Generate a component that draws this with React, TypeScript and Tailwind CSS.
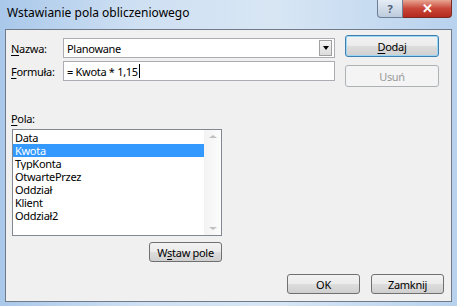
const font = { fontFamily: '"Noto Sans", "Open Sans", sans-serif' };

function Btn({ children, className = "", disabled = false, primary = false }: { children: React.ReactNode; className?: string; disabled?: boolean; primary?: boolean }) {
  if (disabled) {
    return (
      <div className={`flex items-center justify-center rounded-[3px] border border-[#adb2b5] bg-[#f4f4f4] text-[#9a9a9a] ${className}`}>
        {children}
      </div>
    );
  }
  return (
    <div
      className={`flex items-center justify-center rounded-[3px] border ${primary ? "border-[#3c7fb1] shadow-[inset_0_0_0_1px_#9cd6f5]" : "border-[#707070]"} bg-[linear-gradient(#f2f2f2_0%,#ebebeb_50%,#dddddd_51%,#cfcfcf_100%)] text-black ${className}`}
    >
      {children}
    </div>
  );
}

export default function App() {
  const fields = ["Data", "Kwota", "TypKonta", "OtwartePrzez", "Oddział", "Klient", "Oddział2"];

  return (
    <div
      style={font}
      className="w-[457px] h-[306px] overflow-hidden flex flex-col text-[11px] tracking-[-0.3px] leading-[13px] bg-[linear-gradient(90deg,#a9c8ea_0%,#cfe0f3_30%,#d8e6f4_60%,#b8d2ee_100%)]"
    >
      {/* title bar */}
      <div className="h-[29px] flex items-start shrink-0">
        <div className="pl-[7px] pt-[6px] text-[12px] tracking-normal leading-[14px] text-black">Wstawianie pola obliczeniowego</div>
        <div className="ml-auto mr-[5px] flex">
          <div className="w-[26px] h-[18px] rounded-bl-[4px] border border-[#6d7f96] border-t-0 bg-[linear-gradient(#e6edf5,#bccbdc)] flex items-center justify-center text-[#4a5d74] text-[11px] font-bold">
            ?
          </div>
          <div className="w-[49px] h-[18px] rounded-br-[4px] border border-[#7a2a22] border-t-0 border-l-0 bg-[linear-gradient(#e8a593,#c9473a_50%,#b42a1e)] flex items-center justify-center text-white text-[13px] font-bold">
            ✕
          </div>
        </div>
      </div>

      {/* client area */}
      <div className="mx-[5px] h-[273px] border border-[#6f7b88] bg-[#f0f0f0] flex flex-col">
        <div className="flex">
          <div className="pl-[5px] pt-[8px] flex flex-col gap-[3px]">
            <div className="flex items-center h-[20px]">
              <span className="w-[52px]">
                <span className="underline underline-offset-2">N</span>azwa:
              </span>
              <div className="w-[272px] h-[20px] border border-[#abadb3] bg-white flex items-center">
                <span className="pl-[3px] flex-1">Planowane</span>
                <div className="w-[13px] h-[16px] mr-[2px] border border-[#a0a0a0] bg-[linear-gradient(#f4f4f4,#dcdcdc)] flex items-center justify-center">
                  <div className="w-0 h-0 border-l-[3px] border-r-[3px] border-t-[4px] border-l-transparent border-r-transparent border-t-black" />
                </div>
              </div>
            </div>
            <div className="flex items-center h-[20px]">
              <span className="w-[52px]">
                <span className="underline underline-offset-2">F</span>ormuła:
              </span>
              <div className="w-[272px] h-[20px] border border-[#abadb3] bg-white flex items-center">
                <span className="pl-[3px]">= Kwota * 1,15</span>
                <span className="w-px h-[14px] bg-black ml-px" />
              </div>
            </div>
          </div>
          <div className="ml-[10px] pt-[5px] flex flex-col gap-[8px]">
            <Btn primary className="w-[94px] h-[22px]">
              <span className="underline underline-offset-2">D</span>odaj
            </Btn>
            <Btn disabled className="w-[94px] h-[22px]">
              Usuń
            </Btn>
          </div>
        </div>

        <div className="pl-[5px] mt-[25px]">
          <span className="underline underline-offset-2">P</span>ola:
        </div>
        <div className="ml-[6px] mt-[4px] w-[210px] h-[107px] border border-[#828790] bg-white flex">
          <div className="flex-1 pt-[1px]">
            {fields.map((f) => (
              <div
                key={f}
                className={`h-[13px] pl-[2px] flex items-center overflow-hidden ${f === "Kwota" ? "bg-[#3399ff] text-white" : "text-black"}`}
              >
                <span className="leading-[12px]">{f}</span>
              </div>
            ))}
          </div>
          <div className="w-[17px] bg-[linear-gradient(90deg,#f3f3f3,#fcfcfc)] flex flex-col justify-between items-center py-[5px]">
            <div className="w-0 h-0 border-l-[4px] border-r-[4px] border-b-[3px] border-l-transparent border-r-transparent border-b-[#c0c0c0]" />
            <div className="w-0 h-0 border-l-[4px] border-r-[4px] border-t-[3px] border-l-transparent border-r-transparent border-t-[#c0c0c0]" />
          </div>
        </div>

        <div className="mt-[6px] flex">
          <Btn className="ml-[143px] w-[73px] h-[20px]">
            W<span className="underline underline-offset-2">s</span>taw pole
          </Btn>
        </div>

        <div className="mt-[12px] flex justify-end gap-[11px] pr-[7px]">
          <Btn className="w-[73px] h-[20px]">OK</Btn>
          <Btn className="w-[73px] h-[20px]">Zamknij</Btn>
        </div>
      </div>
    </div>
  );
}
